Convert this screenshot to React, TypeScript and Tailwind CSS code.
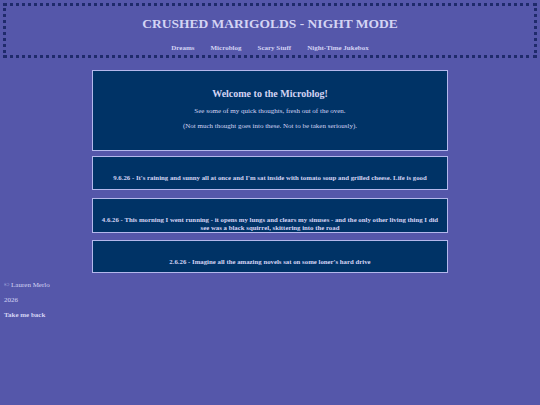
export default function App() {
	const posts = [
		"9.6.26 - It's raining and sunny all at once and I'm sat inside with tomato soup and grilled cheese. Life is good",
		"4.6.26 - This morning I went running - it opens my lungs and clears my sinuses - and the only other living thing I did see was a black squirrel, skittering into the road",
		"2.6.26 - Imagine all the amazing novels sat on some loner's hard drive",
	];

	return (
		<div className="min-h-[405px] bg-[#5557aa] text-[#d4d4f4] font-['Liberation_Serif',serif] pt-[3px] pb-4">
			<header className="mx-[3px] border-[3px] border-dotted border-[#1f2a6b] h-[55px] flex flex-col items-center">
				<h1 className="mt-[10px] text-[13.5px] leading-[16px] font-bold">CRUSHED MARIGOLDS - NIGHT MODE</h1>
				<nav className="mt-[12px] flex gap-[16px] text-[7px] leading-[9px] font-bold">
					<a>Dreams</a>
					<a>Microblog</a>
					<a>Scary Stuff</a>
					<a>Night-Time Jukebox</a>
				</nav>
			</header>

			<main className="w-[356px] mx-auto mt-[12px]">
				<section className="h-[81px] bg-[#003366] border border-[#b4b8ec] text-center pt-[17px]">
					<h2 className="text-[10px] leading-[12px] font-bold">Welcome to the Microblog!</h2>
					<p className="mt-[7px] text-[7px] leading-[9px]">See some of my quick thoughts, fresh out of the oven.</p>
					<p className="mt-[6px] text-[7px] leading-[9px]">(Not much thought goes into these. Not to be taken seriously).</p>
				</section>

				<section className="mt-[5px] h-[34px] bg-[#003366] border border-[#b4b8ec] text-center pt-[17px] px-[8px]">
					<p className="text-[6.8px] leading-[8px] font-bold">{posts[0]}</p>
				</section>
				<section className="mt-[8px] h-[35px] bg-[#003366] border border-[#b4b8ec] text-center pt-[17px] px-[8px]">
					<p className="text-[6.8px] leading-[8px] font-bold">{posts[1]}</p>
				</section>
				<section className="mt-[7px] h-[33px] bg-[#003366] border border-[#b4b8ec] text-center pt-[17px] px-[8px]">
					<p className="text-[6.8px] leading-[8px] font-bold">{posts[2]}</p>
				</section>
			</main>

			<footer className="px-[4px] mt-[8px] text-[7px] leading-[9px]">
				<p>© Lauren Merlo</p>
				<p className="mt-[6px]">2026</p>
				<p className="mt-[6px] font-bold">Take me back</p>
			</footer>
		</div>
	);
}
